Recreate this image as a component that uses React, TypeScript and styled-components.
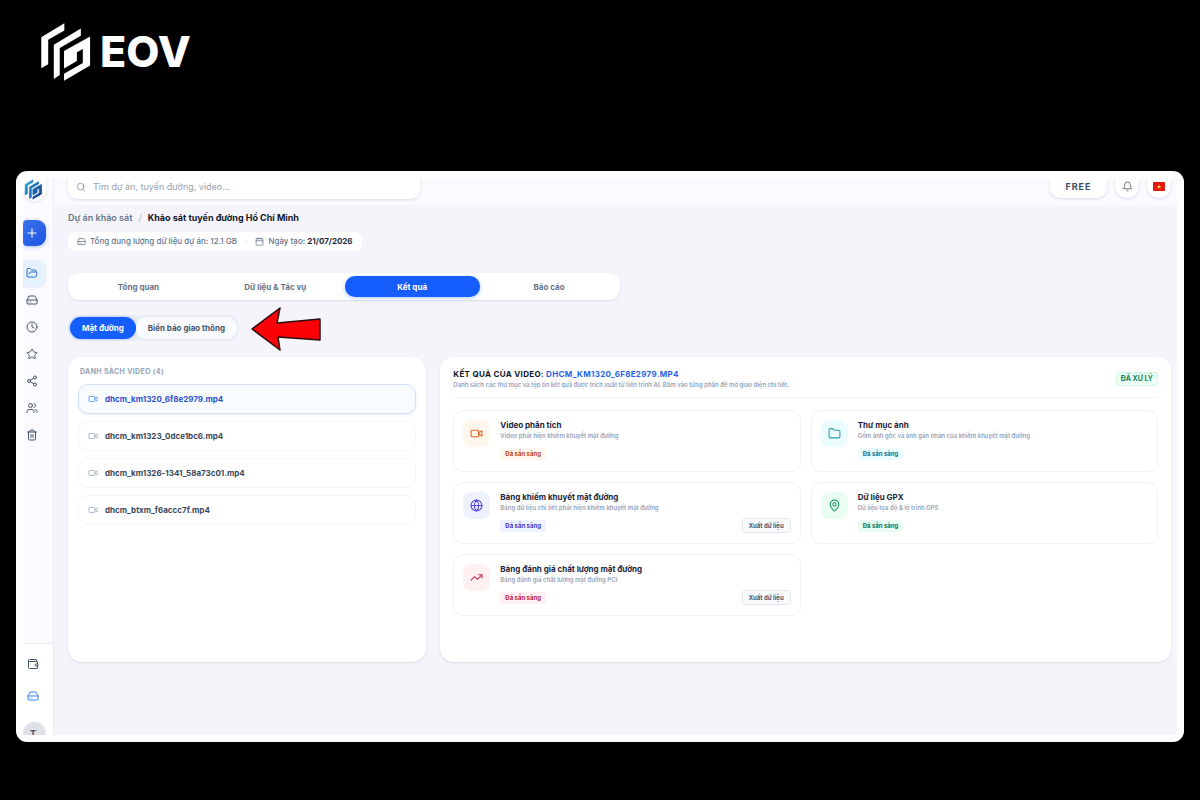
import React from "react";
import styled, { createGlobalStyle, css } from "styled-components";
import {
  Bell, Calendar, Clock, Folder, FolderOpen, Globe, HardDrive, MapPin, Plus,
  Search, Share2, Star, Trash2, TrendingUp, Users, Video, Wallet,
} from "lucide-react";

const GlobalStyle = createGlobalStyle`
  * { box-sizing: border-box; }
  body { margin: 0; background: #000; font-family: Inter, "Noto Sans", sans-serif; color: #1e293b; }
  h1, h2, h3, p, ul { margin: 0; padding: 0; }
  ul { list-style: none; }
  button, input { font: inherit; color: inherit; }
  button { border: 0; padding: 0; background: none; cursor: pointer; }
  a { color: inherit; text-decoration: none; }
`;

const Page = styled.div`
  min-height: 100vh;
  display: flex;
  flex-direction: column;
  padding: 0 16px 58px;
  background: #000;
`;

const Brand = styled.header`
  height: 171px;
  padding: 21px 0 0 19px;
  display: flex;
  align-items: flex-start;
  gap: 3px;
  color: #fff;
`;

const BrandName = styled.span`
  font-size: 43px;
  line-height: 60px;
  font-weight: 800;
`;

const Frame = styled.div`
  flex: 1;
  display: flex;
  padding: 7px;
  border-radius: 11px;
  background: #fff;
`;

const Workspace = styled.div`
  flex: 1;
  min-width: 0;
  display: flex;
  overflow: hidden;
  background: #f4f4fa;
`;

const Sidebar = styled.aside`
  width: 31px;
  height: 557px;
  flex: none;
  display: flex;
  flex-direction: column;
  overflow: hidden;
  border-right: 1px solid #ededf4;
  background: #fafaff;
`;

const LogoLink = styled.a`
  width: 23px;
  height: 23px;
  flex: none;
  padding-right: 3px;
  display: grid;
  place-items: center;
  border-radius: 0 0 12px 12px;
  background: #fff;
  box-shadow: 0 1px 3px rgba(30, 41, 90, 0.12);
`;

const AddButton = styled.button`
  width: 23px;
  height: 26px;
  flex: none;
  margin: 19px 0 14px;
  padding-right: 5px;
  display: grid;
  place-items: center;
  border-radius: 4px 9px 9px 4px;
  background: linear-gradient(135deg, #3b74ef, #1d52e0);
  color: #fff;
  box-shadow: 0 1px 4px rgba(37, 99, 235, 0.35);
`;

const Nav = styled.nav`
  flex: 1;
  min-height: 0;
  display: flex;
  flex-direction: column;
  gap: 1px;
`;

const NavLink = styled.a<{ $active?: boolean }>`
  width: 23px;
  height: 26px;
  padding-right: 5px;
  display: grid;
  place-items: center;
  border-radius: 0 8px 8px 0;
  color: ${(p) => (p.$active ? "#2f6fd0" : "#4b5668")};
  background: ${(p) => (p.$active ? "#e6f1fe" : "transparent")};
  box-shadow: ${(p) => (p.$active ? "0 1px 2px rgba(59, 130, 246, 0.15)" : "none")};
`;

const SideFooter = styled.div`
  height: 92px;
  flex: none;
  display: flex;
  flex-direction: column;
  gap: 20px;
  padding: 14px 0 0 4px;
  border-top: 1px solid #ececf2;
  background: #fff;
`;

const FooterLink = styled.a<{ $accent?: boolean }>`
  height: 12px;
  display: flex;
  color: ${(p) => (p.$accent ? "#3b82f6" : "#4b5668")};
`;

const Avatar = styled.button`
  width: 23px;
  height: 23px;
  flex: none;
  margin-left: -4px;
  padding-right: 3px;
  border-radius: 12px;
  background: #dfe1e8;
  color: #4b5563;
  font-size: 9px;
  font-weight: 700;
`;

const Main = styled.div`
  flex: 1;
  min-width: 0;
`;

const TopBar = styled.header`
  height: 27px;
  display: flex;
  justify-content: space-between;
  align-items: flex-start;
  padding: 0 6px 0 14px;
  background: #fafaff;
`;

const topPill = css`
  background: #fff;
  box-shadow: 0 1px 3px rgba(30, 41, 90, 0.14);
`;

const SearchBox = styled.label`
  ${topPill}
  width: 352px;
  height: 21px;
  padding: 0 8px 4px;
  display: flex;
  align-items: center;
  gap: 7px;
  border-radius: 0 0 9px 9px;
  color: #8b93a3;
`;

const SearchInput = styled.input`
  flex: 1;
  min-width: 0;
  border: 0;
  padding: 0;
  outline: 0;
  background: transparent;
  font-size: 9px;
  &::placeholder { color: #9aa1af; opacity: 1; }
`;

const TopActions = styled.div`
  display: flex;
  gap: 8px;
`;

const PlanButton = styled.button`
  ${topPill}
  width: 57px;
  height: 20px;
  padding-bottom: 4px;
  border-radius: 0 0 10px 10px;
  font-size: 9px;
  font-weight: 700;
  letter-spacing: 1px;
  color: #3c4a62;
`;

const RoundButton = styled.button`
  ${topPill}
  width: 24px;
  height: 20px;
  padding-bottom: 4px;
  display: grid;
  place-items: center;
  border-radius: 0 0 12px 12px;
  color: #5b6575;
`;

const Content = styled.main`
  padding: 7px 6px 20px 14px;
`;

const Crumbs = styled.nav`
  display: flex;
  gap: 6px;
  font-size: 9px;
  line-height: 12px;
  font-weight: 600;
  color: #64748b;
`;

const Slash = styled.span`
  color: #c0c6d0;
`;

const Current = styled.h1`
  font-size: 9px;
  line-height: 12px;
  font-weight: 700;
  color: #111827;
`;

const Meta = styled.div`
  width: fit-content;
  height: 19px;
  margin: 8px 0 22px;
  padding: 0 9px;
  display: flex;
  align-items: center;
  gap: 4px;
  border-radius: 7px;
  background: #fff;
  font-size: 8px;
  line-height: 17px;
  font-weight: 500;
  color: #64748b;
  strong { color: #1e293b; font-weight: 700; }
`;

const Dot = styled.span`
  padding: 0 4px;
  color: #c0c6d0;
`;

const Tabs = styled.div`
  width: 50%;
  height: 27px;
  padding: 3px;
  display: grid;
  grid-template-columns: repeat(4, 1fr);
  gap: 2px;
  border-radius: 11px;
  background: #fff;
  box-shadow: 0 1px 2px rgba(30, 41, 90, 0.1);
`;

const Tab = styled.button<{ $active?: boolean }>`
  border-radius: 10px;
  font-size: 8px;
  font-weight: 700;
  color: ${(p) => (p.$active ? "#fff" : "#64748b")};
  background: ${(p) => (p.$active ? "#155dfc" : "transparent")};
  box-shadow: ${(p) => (p.$active ? "0 1px 4px rgba(21, 93, 252, 0.35)" : "none")};
`;

const SubTabRow = styled.div`
  display: flex;
  gap: 13px;
  align-items: flex-start;
`;

const SubTabs = styled.div`
  width: fit-content;
  height: 26px;
  margin: 15px 0 16px;
  padding: 2px;
  display: flex;
  border-radius: 13px;
  background: #e9edf5;
`;

const SubTab = styled.button<{ $active?: boolean }>`
  padding: 0 12px;
  border-radius: 11px;
  font-size: 8px;
  font-weight: 700;
  color: ${(p) => (p.$active ? "#fff" : "#475569")};
  background: ${(p) => (p.$active ? "#155dfc" : "#fafbfe")};
  box-shadow: ${(p) => (p.$active ? "0 0 3px rgba(21, 93, 252, 0.4)" : "none")};
`;

const Arrow = styled.svg`
  width: 72px;
  height: 46px;
  margin: 6px 0 -12px -2px;
`;

const Panels = styled.div`
  display: grid;
  grid-template-columns: repeat(12, minmax(0, 1fr));
  gap: 14px;
  min-height: 305px;
`;

const Panel = styled.section<{ $span: number }>`
  grid-column: span ${(p) => p.$span};
  border-radius: 14px;
  background: #fff;
  box-shadow: 0 1px 2px rgba(30, 41, 90, 0.12);
`;

const ListPanel = styled(Panel)`
  padding: 9px 10px;
`;

const ListTitle = styled.h2`
  padding-left: 2px;
  margin-bottom: 7px;
  font-size: 7px;
  line-height: 11px;
  font-weight: 700;
  letter-spacing: 0.05em;
  color: #94a3b8;
`;

const VideoList = styled.ul`
  display: flex;
  flex-direction: column;
  gap: 7px;
`;

const VideoButton = styled.button<{ $active?: boolean }>`
  width: 100%;
  height: 30px;
  padding: 0 9px;
  display: flex;
  align-items: center;
  gap: 7px;
  border-radius: 10px;
  border: 1px solid ${(p) => (p.$active ? "#d3e2f8" : "#f4f5f9")};
  background: ${(p) => (p.$active ? "#f8fbff" : "#fff")};
  box-shadow: ${(p) => (p.$active ? "0 1px 2px rgba(30, 64, 175, 0.1)" : "none")};
  font-size: 8px;
  font-weight: 700;
  color: ${(p) => (p.$active ? "#2a52c9" : "#3a475b")};
  svg { color: ${(p) => (p.$active ? "#5c97ea" : "#a3adbd")}; }
`;

const ResultPanel = styled(Panel)`
  padding: 11px 13px;
`;

const ResultHead = styled.div`
  display: flex;
  align-items: center;
  justify-content: space-between;
  padding-bottom: 7px;
  margin-bottom: 12px;
  border-bottom: 1px solid #f2f3f7;
`;

const ResultTitle = styled.h2`
  font-size: 8px;
  line-height: 12px;
  font-weight: 700;
  letter-spacing: 0.04em;
  color: #111827;
  span { color: #2563eb; }
`;

const Note = styled.p`
  font-size: 6px;
  line-height: 10px;
  font-weight: 600;
  color: #94a3b8;
`;

const DoneBadge = styled.span`
  padding: 0 4px;
  line-height: 12px;
  border: 1px solid #d3f8e2;
  border-radius: 3px;
  background: #ecfdf4;
  color: #12825a;
  font-size: 7px;
  font-weight: 700;
`;

const Cards = styled.div`
  display: grid;
  grid-template-columns: repeat(2, minmax(0, 1fr));
  grid-auto-rows: 62px;
  gap: 10px;
`;

const Card = styled.article`
  display: flex;
  align-items: flex-start;
  gap: 10px;
  padding: 9px;
  border: 1px solid #f0f1f6;
  border-radius: 10px;
  background: #fff;
`;

const IconTile = styled.span<{ $fg: string; $bg: string }>`
  width: 27px;
  height: 27px;
  flex: none;
  display: grid;
  place-items: center;
  border-radius: 8px;
  color: ${(p) => p.$fg};
  background: ${(p) => p.$bg};
`;

const CardBody = styled.div`
  flex: 1;
  min-width: 0;
`;

const CardTitle = styled.h3`
  font-size: 8px;
  line-height: 11px;
  font-weight: 700;
  color: #1a2438;
`;

const CardFoot = styled.div`
  height: 15px;
  margin-top: 5px;
  display: flex;
  align-items: center;
  justify-content: space-between;
`;

const Status = styled.span<{ $fg: string; $bg: string }>`
  padding: 0 5px;
  border-radius: 3px;
  font-size: 6px;
  line-height: 12px;
  font-weight: 700;
  color: ${(p) => p.$fg};
  background: ${(p) => p.$bg};
`;

const ExportButton = styled.button`
  height: 15px;
  padding: 0 6px;
  border: 1px solid #e4e9f1;
  border-radius: 3px;
  background: #f9fafc;
  color: #475569;
  font-size: 6px;
  font-weight: 700;
`;

const EovMark = ({ size, tinted }: { size: number; tinted?: boolean }) => (
  <svg width={size} height={size} viewBox="7 7 176 188" aria-hidden="true">
    {tinted && (
      <defs>
        <linearGradient id="mark" gradientUnits="userSpaceOnUse" x1="20" y1="40" x2="168" y2="150">
          <stop offset="0" stopColor="#2aa5dc" />
          <stop offset="1" stopColor="#143a86" />
        </linearGradient>
      </defs>
    )}
    <g
      fill={tinted ? "url(#mark)" : "currentColor"}
      stroke={tinted ? "url(#mark)" : "none"}
      strokeWidth="5"
    >
      <path d="M90 14V36L41 64V138L20 150V56Z" />
      <path d="M140 30V52L76 89V171L58 183V79Z" />
      <path d="M168 54V142L89 188V167L146 134V92L128 102V128L89 151V98Z" />
    </g>
  </svg>
);

const Flag = () => (
  <svg width="12" height="9" viewBox="0 0 12 9" role="img" aria-label="Tiếng Việt">
    <rect width="12" height="9" rx="1" fill="#e3170f" />
    <path d="M6 2.2l.6 1.700h1.800L7 5l.5 1.700L6 5.700 4.500 6.700 5 5 3.600 3.900h1.800z" fill="#ffd22e" />
  </svg>
);

const navItems = [
  { label: "Dự án", icon: FolderOpen, active: true },
  { label: "Lưu trữ", icon: HardDrive },
  { label: "Gần đây", icon: Clock },
  { label: "Yêu thích", icon: Star },
  { label: "Chia sẻ", icon: Share2 },
  { label: "Thành viên", icon: Users },
  { label: "Thùng rác", icon: Trash2 },
];

const tabs = ["Tổng quan", "Dữ liệu & Tác vụ", "Kết quả", "Báo cáo"];

const videos = [
  "dhcm_km1320_6f8e2979.mp4",
  "dhcm_km1323_0dce1bc6.mp4",
  "dhcm_km1326-1341_58a73c01.mp4",
  "dhcm_btxm_f6accc7f.mp4",
];

const results = [
  { title: "Video phân tích", note: "Video phát hiện khiếm khuyết mặt đường", icon: Video, fg: "#e0672a", bg: "#fff6ec", text: "#c2491d", exportable: false },
  { title: "Thư mục ảnh", note: "Gồm ảnh gốc và ảnh gán nhãn của khiếm khuyết mặt đường", icon: Folder, fg: "#2b9fb8", bg: "#ebfdff", text: "#1b7186", exportable: false },
  { title: "Bảng khiếm khuyết mặt đường", note: "Bảng dữ liệu chi tiết phát hiện khiếm khuyết mặt đường", icon: Globe, fg: "#5747d1", bg: "#eef1ff", text: "#4a3cc4", exportable: true },
  { title: "Dữ liệu GPX", note: "Dữ liệu tọa độ & lộ trình GPS", icon: MapPin, fg: "#1f9d68", bg: "#eafdf3", text: "#14734f", exportable: false },
  { title: "Bảng đánh giá chất lượng mặt đường", note: "Bảng đánh giá chất lượng mặt đường PCI", icon: TrendingUp, fg: "#d02c54", bg: "#fff0f2", text: "#bb1f48", exportable: true },
];

export default function App() {
  return (
    <Page>
      <GlobalStyle />
      <Brand>
        <EovMark size={62} />
        <BrandName>EOV</BrandName>
      </Brand>
      <Frame>
        <Workspace>
          <Sidebar>
            <LogoLink href="#" aria-label="EOV"><EovMark size={21} tinted /></LogoLink>
            <AddButton aria-label="Tạo mới"><Plus size={14} strokeWidth={2} /></AddButton>
            <Nav>
              {navItems.map(({ label, icon: Icon, active }) => (
                <NavLink key={label} href="#" aria-label={label} $active={active}>
                  <Icon size={12} strokeWidth={2} />
                </NavLink>
              ))}
            </Nav>
            <SideFooter>
              <FooterLink href="#" aria-label="Ví"><Wallet size={12} /></FooterLink>
              <FooterLink href="#" aria-label="Dung lượng" $accent><HardDrive size={12} /></FooterLink>
              <Avatar>T</Avatar>
            </SideFooter>
          </Sidebar>
          <Main>
            <TopBar>
              <SearchBox>
                <Search size={10} />
                <SearchInput type="search" aria-label="Tìm kiếm" placeholder="Tìm dự án, tuyến đường, video..." />
              </SearchBox>
              <TopActions>
                <PlanButton>FREE</PlanButton>
                <RoundButton aria-label="Thông báo"><Bell size={11} /></RoundButton>
                <RoundButton aria-label="Ngôn ngữ"><Flag /></RoundButton>
              </TopActions>
            </TopBar>
            <Content>
              <Crumbs>
                <a href="#">Dự án khảo sát</a>
                <Slash>/</Slash>
                <Current>Khảo sát tuyến đường Hồ Chí Minh</Current>
              </Crumbs>
              <Meta>
                <HardDrive size={9} />
                <span>Tổng dung lượng dữ liệu dự án: 12.1 GB</span>
                <Dot>·</Dot>
                <Calendar size={9} />
                <span>Ngày tạo: <strong>21/07/2026</strong></span>
              </Meta>
              <Tabs>
                {tabs.map((tab) => (
                  <Tab key={tab} $active={tab === "Kết quả"}>{tab}</Tab>
                ))}
              </Tabs>
              <SubTabRow>
                <SubTabs>
                  <SubTab $active>Mặt đường</SubTab>
                  <SubTab>Biển báo giao thông</SubTab>
                </SubTabs>
                <Arrow viewBox="0 0 72 46" aria-hidden="true">
                  <path d="M2 23L30 2L27 17L70 13V34L28 31L30 44Z" fill="#fb0007" stroke="#2a0f12" strokeWidth="1.500" strokeLinejoin="round" />
                </Arrow>
              </SubTabRow>
              <Panels>
                <ListPanel $span={4}>
                  <ListTitle>DANH SÁCH VIDEO (4)</ListTitle>
                  <VideoList>
                    {videos.map((name, i) => (
                      <li key={name}>
                        <VideoButton $active={i === 0}><Video size={10} />{name}</VideoButton>
                      </li>
                    ))}
                  </VideoList>
                </ListPanel>
                <ResultPanel $span={8}>
                  <ResultHead>
                    <div>
                      <ResultTitle>KẾT QUẢ CỦA VIDEO: <span>DHCM_KM1320_6F8E2979.MP4</span></ResultTitle>
                      <Note>Danh sách các thư mục và tệp tin kết quả được trích xuất từ tiến trình AI. Bấm vào từng phần để mở giao diện chi tiết.</Note>
                    </div>
                    <DoneBadge>ĐÃ XỬ LÝ</DoneBadge>
                  </ResultHead>
                  <Cards>
                    {results.map(({ title, note, icon: Icon, fg, bg, text, exportable }) => (
                      <Card key={title}>
                        <IconTile $fg={fg} $bg={bg}><Icon size={13} /></IconTile>
                        <CardBody>
                          <CardTitle>{title}</CardTitle>
                          <Note>{note}</Note>
                          <CardFoot>
                            <Status $fg={text} $bg={bg}>Đã sẵn sàng</Status>
                            {exportable && <ExportButton>Xuất dữ liệu</ExportButton>}
                          </CardFoot>
                        </CardBody>
                      </Card>
                    ))}
                  </Cards>
                </ResultPanel>
              </Panels>
            </Content>
          </Main>
        </Workspace>
      </Frame>
    </Page>
  );
}
